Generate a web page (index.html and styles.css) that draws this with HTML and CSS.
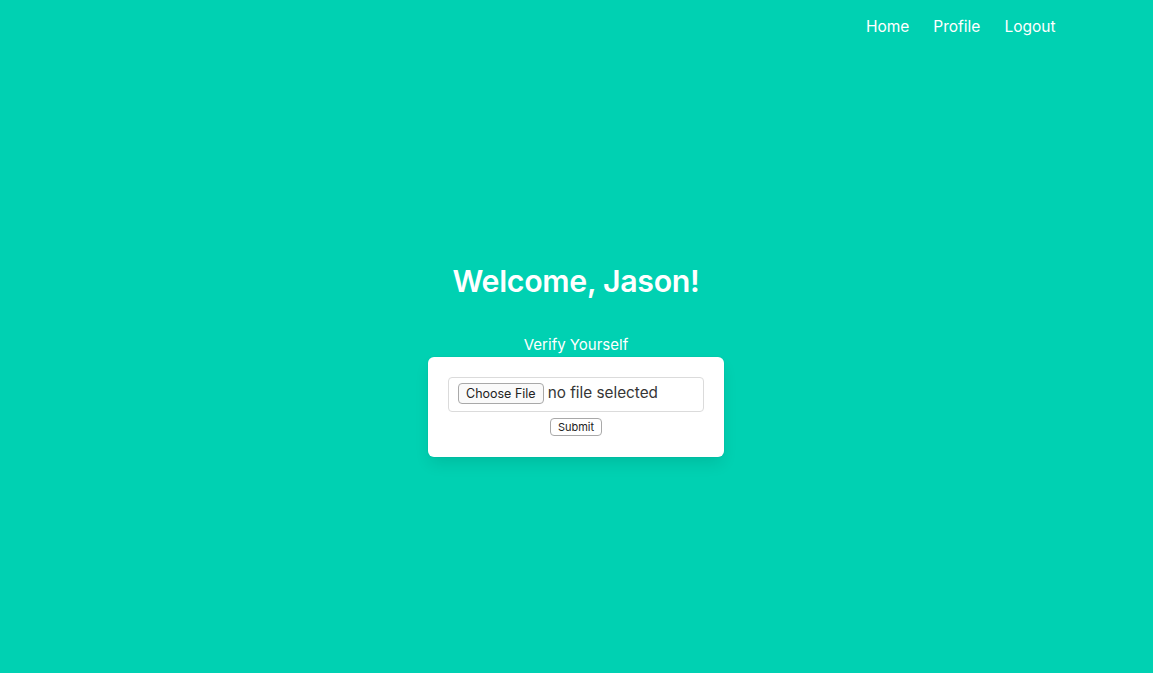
FILE: index.html
```html
<!DOCTYPE html>
<html lang="en">
<head>
<meta charset="utf-8">
<title>Welcome</title>
<link rel="stylesheet" href="styles.css">
</head>
<body>
<div class="hero">
  <nav class="navbar">
    <div class="container nav-inner">
      <a class="nav-item" href="#">Home</a>
      <a class="nav-item" href="#">Profile</a>
      <a class="nav-item" href="#">Logout</a>
    </div>
  </nav>
  <main class="hero-body">
    <h1 class="title">Welcome, Jason!</h1>
    <p class="subtitle">Verify Yourself</p>
    <form class="box">
      <div class="file-field">
        <span class="file-btn">Choose File</span>
        <span class="file-name">no file selected</span>
      </div>
      <button type="button" class="submit">Submit</button>
    </form>
  </main>
</div>
</body>
</html>
```

FILE: styles.css
```css
html, body {
  margin: 0;
  padding: 0;
}
body {
  font-family: Inter, "Noto Sans", "Liberation Sans", sans-serif;
  background: #00d1b2;
  color: #fff;
}
.hero {
  min-height: 100vh;
  display: flex;
  flex-direction: column;
}
.navbar {
  height: 52px;
  display: flex;
}
.container {
  width: 960px;
  margin: 0 auto;
}
.nav-inner {
  display: flex;
  justify-content: flex-end;
  align-items: center;
  padding-top: 2px;
  padding-right: 1px;
  box-sizing: border-box;
}
.nav-item {
  color: #fff;
  text-decoration: none;
  font-size: 15.5px;
  padding: 0 12px;
  line-height: 24px;
}
.nav-item:last-child {
  padding-right: 0;
}
.hero-body {
  flex: 1;
  display: flex;
  flex-direction: column;
  align-items: center;
  justify-content: center;
  padding-bottom: 5px;
  padding-right: 1px;
}
.title {
  margin: 0 0 34px;
  font-size: 30.3px;
  font-weight: 600;
  line-height: 36px;
  letter-spacing: -0.3px;
}
.subtitle {
  margin: 0;
  font-size: 15px;
  line-height: 24px;
}
.box {
  width: 256px;
  padding: 20px 20px 21px;
  background: #fff;
  border-radius: 6px;
  box-shadow: 0 0.5em 1em -0.125em rgba(10, 10, 10, 0.1), 0 0 0 1px rgba(10, 10, 10, 0.02);
  display: flex;
  flex-direction: column;
  align-items: center;
  gap: 6px;
}
.file-field {
  box-sizing: border-box;
  width: 256px;
  height: 35px;
  border: 1px solid #dbdbdb;
  border-radius: 4px;
  display: flex;
  align-items: center;
  padding: 0 9px 2px;
  gap: 4px;
}
.file-btn {
  box-sizing: border-box;
  height: 21px;
  padding: 0 7px;
  border: 1px solid #a9a9a9;
  border-radius: 4px;
  background: #fafafa;
  color: #222;
  font-size: 12.5px;
  line-height: 19px;
}
.file-name {
  color: #363636;
  font-size: 15.3px;
  line-height: 20px;
  margin-bottom: 2px;
}
.submit {
  box-sizing: border-box;
  height: 18px;
  width: 52px;
  padding: 0;
  border: 1px solid #a9a9a9;
  border-radius: 4px;
  background: #fff;
  color: #222;
  font-family: Inter, "Noto Sans", "Liberation Sans", sans-serif;
  font-size: 11px;
  line-height: 16px;
}
```
